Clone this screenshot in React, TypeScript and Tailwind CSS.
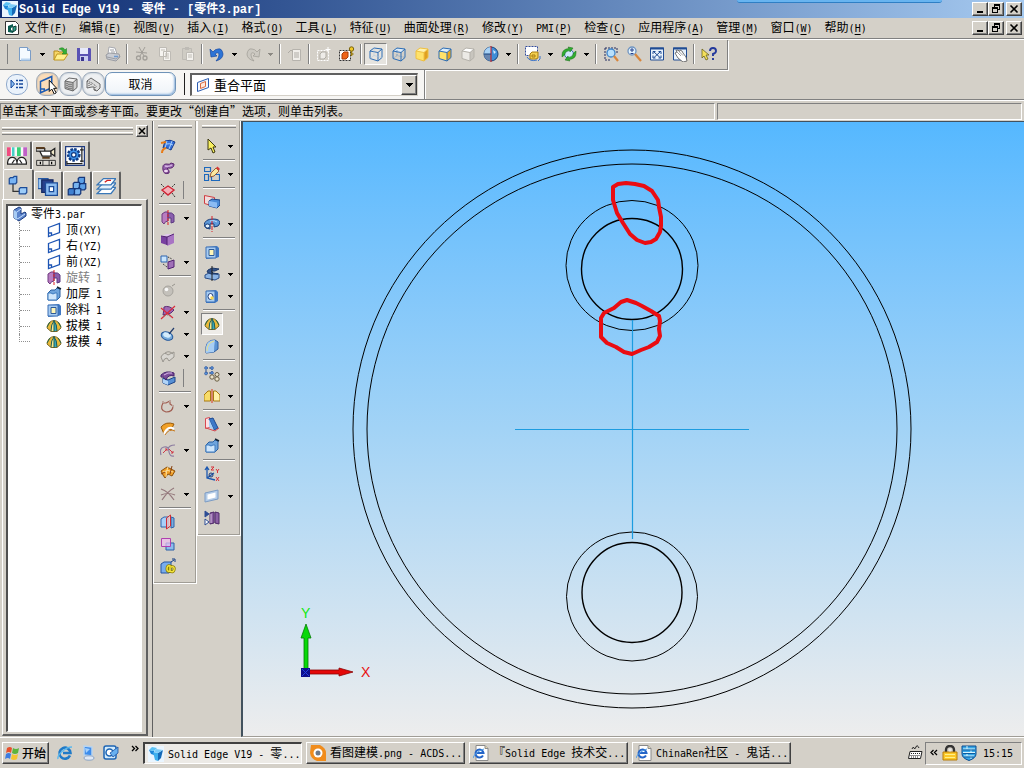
import type { ReactNode } from "react";

/* ---------- text ---------- */

function Txt({ children, bold = false }: { children: string; bold?: boolean }) {
  const parts = children.match(/[\x20-\x7e]+|[^\x20-\x7e]+/g) ?? [];
  return (
    <>
      {parts.map((p, i) =>
        /[\x20-\x7e]/.test(p) ? (
          <span
            key={i}
            className={
              bold
                ? "whitespace-pre font-['Liberation_Mono',monospace] text-[12px]"
                : "whitespace-pre font-['DejaVu_Sans_Mono',monospace] text-[10px]"
            }
          >
            {p}
          </span>
        ) : (
          <span key={i} className="font-['Noto_Sans_CJK_SC',sans-serif] text-[12px]">
            {p}
          </span>
        ),
      )}
    </>
  );
}

/* ---------- icons ---------- */

const cube = (front: string, top: string, side: string, line: string) => (
  <>
    <path d="M2 5l8 1.500V15L2 12.500z" fill={front} />
    <path d="M2 5l4-3 8 1-4 3.500z" fill={top} />
    <path d="M10 6.500L14 3v8.500L10 15z" fill={side} />
    <path d="M2 5l4-3 8 1v8.500L10 15 2 12.500zM2 5l8 1.500L14 3M10 6.500V15" fill="none" stroke={line} />
  </>
);

const plane = (c: string) => (
  <path d="M2.500 5.500L13.500 1.500V10.500L2.500 14.500zM2.500 11h3v3" fill="none" stroke={c} strokeWidth="1.300" />
);

const draft = (
  <>
    <path d="M1 10Q2 3 8 2.500Q14 3 15 10L11 13.500H5z" fill="#e8b93a" stroke="#7a6a28" />
    <path d="M8 3Q5 6 5 13h3z" fill="#f8e88c" />
    <path d="M8 3q3 3 3 10H8z" fill="#3aa8b8" />
    <path d="M8 2v12M5 13Q5 6 8 3q3 3 3 10" fill="none" stroke="#1b5d5a" />
    <path d="M4 4L1 9M12 4l3 5" stroke="#2f6a4a" />
  </>
);

const thicken = (
  <>
    <path d="M2 7l3-3h4l2-2 3 1v8l-3 3H2z" fill="#6ea4dc" stroke="#2a5fa0" />
    <path d="M2 7h3q2 2 4 0h2v7H2z" fill="#cfe6fb" stroke="#3f7cc0" />
    <path d="M11 1l4 2" stroke="#123" strokeWidth="1.500" />
  </>
);

const cutout = (
  <>
    <path d="M2 3l11-1 2 2v9l-3 1-10 1z" fill="#3f78c4" />
    <path d="M2 3l10 0v11L2 14z" fill="#a9cdf2" stroke="#3a6fb4" />
    <path d="M5 5.500h5v6H5z" fill="#fff6b8" stroke="#2c5a98" />
  </>
);

const revolve = (
  <>
    <path d="M2 4q3-3 6-2v9q-3 0-4 3L2 12z" fill="#b87cc0" stroke="#6e3a80" />
    <path d="M8 3q4-1 6 2v7l-3 1V8H8z" fill="#8a5fae" stroke="#5c3a80" />
    <path d="M8 0v16" stroke="#e02020" strokeDasharray="3 1" />
  </>
);

const sheets = (
  <>
    <path d="M6 9h10l-4 5H1z" fill="#fff" stroke="#3a78b8" />
    <path d="M6 5.500h10l-4 5H1z" fill="#e6f1fb" stroke="#3a78b8" />
    <path d="M6 2h10l-4 5H1z" fill="#fff" stroke="#3a78b8" />
    <path d="M7 5l2-1.500h3" fill="none" stroke="#d02020" />
  </>
);

const ie = (
  <>
    <path d="M13 10.500A5.500 5.500 0 1 1 13.500 8H6" fill="none" stroke="#1f7ac8" strokeWidth="2.600" />
    <path d="M1 14C0 10 8 2 15 2" fill="none" stroke="#5bb8ee" strokeWidth="1.400" />
  </>
);

const iePage = (
  <>
    <path d="M3 .5h9l3 3v12H3z" fill="#fff" stroke="#8a8a8a" />
    <path d="M12 .5v3h3" fill="#e8d8a8" stroke="#8a8a8a" />
    <path d="M10 10.500A4 4 0 1 1 10.500 8H4" fill="none" stroke="#2465c8" strokeWidth="2" />
    <path d="M0 13Q2 7 11 4" fill="none" stroke="#4b9be8" />
  </>
);

const solidEdge = (
  <>
    <path d="M0 0h16v16H0z" fill="#e9f5ff" />
    <path d="M1 4l5 1v4L3 8z" fill="#1e86d8" />
    <path d="M5 6l5 1v8l-3-1z" fill="#3fb0ee" />
    <path d="M10 7l5-3-2 8-3 3z" fill="#156ab8" />
    <path d="M8 3l7 1-5 3-4-1z" fill="#7cccf8" />
    <path d="M1 4l3-3 5 1-3 3z" fill="#5cc2f4" />
  </>
);

const icons: Record<string, ReactNode> = {
  app: solidEdge,
  part: (
    <>
      <path d="M1.500 1.500h10l3 3v10h-13z" fill="#fff" stroke="#333" />
      <path d="M4 6l5-2v3L7 8v2l2 1v2L4 12z" fill="#0c5c50" />
      <path d="M9 7l3-1v4l-3 2z" fill="#2fa08a" stroke="#0c3c34" />
    </>
  ),
  new: (
    <>
      <path d="M2.500 1.500h8l3 3v10h-11z" fill="#f4faff" stroke="#7a9cc6" />
      <path d="M10.500 1.500v3h3" fill="#c3dcf6" stroke="#7a9cc6" />
      <path d="M4 13.500h9" stroke="#b9d4f0" strokeWidth="2" />
    </>
  ),
  open: (
    <>
      <path d="M1 14V5h4l1 1h5v3" fill="#f7d768" stroke="#b58a1c" />
      <path d="M1 14l3-6h11l-4 6z" fill="#fff08c" stroke="#c0961e" />
      <path d="M6 3q4-3 6 1l1.500-1.500V8H9l1.500-1.500Q9 3 6 3z" fill="#35b035" stroke="#1b7a1b" strokeWidth=".5" />
    </>
  ),
  save: (
    <>
      <path d="M1 2h13l1 1v12H1z" fill="#5a52b4" />
      <path d="M4 2h8v6H4z" fill="#e6e9fb" />
      <path d="M4 10h8v5H4z" fill="#c9cdf0" />
      <path d="M5 11h3v4H5z" fill="#3b348c" />
    </>
  ),
  print: (
    <>
      <path d="M3 8L4 1l6 1 2 6" fill="#fff" stroke="#a8aab0" />
      <path d="M1 9l3-2 10 1 1 3-4 4-9-2z" fill="#c9ccd2" stroke="#9a9ca2" />
      <path d="M2 11l9 2 4-3M5 4h4M6 6h4" fill="none" stroke="#9a9ca2" />
      <path d="M9 10.500h4" stroke="#6c9ad0" strokeWidth="1.500" />
    </>
  ),
  cut: (
    <>
      <path d="M5 1l5 9M11 1L6 10M2 6l11 1" fill="none" stroke="#a29f99" />
      <circle cx="4.500" cy="12" r="2" fill="none" stroke="#a29f99" strokeWidth="1.300" />
      <circle cx="11" cy="12" r="2" fill="none" stroke="#a29f99" strokeWidth="1.300" />
    </>
  ),
  copy: (
    <>
      <path d="M2.500 1.500h7v9h-7zM6.500 5.500h7v9h-7z" fill="#f6f4f1" stroke="#bebbb5" />
      <path d="M8 8h4M8 10h4M8 12h4M4 4h4" stroke="#c0bdb6" />
    </>
  ),
  paste: (
    <>
      <path d="M2.500 2.500h9v11h-9z" fill="#cfccc4" stroke="#bebbb5" />
      <path d="M5 1h4v3H5z" fill="#bebbb5" />
      <path d="M6.500 6.500h7v8h-7z" fill="#f4f2ee" stroke="#bebbb5" />
      <path d="M8 9h4M8 11h4" stroke="#c0bdb6" />
    </>
  ),
  undo: (
    <path
      d="M1 3l1 8 6-1-2-2q4-3 4 1 0 3-3 6 7-2 7-7Q13 2 9 3 6 3 4 6z"
      fill="#2d74d6"
      stroke="#1548a0"
      strokeWidth=".7"
    />
  ),
  redo: (
    <path
      d="M15 3l-1 8-6-1 2-2Q6 5 6 9q0 3 3 6-7-2-7-7Q3 2 7 3q3 0 5 3z"
      fill="#cbc8c1"
      stroke="#9e9b94"
      strokeWidth=".7"
    />
  ),
  props: (
    <>
      <path d="M5.500 3.500h8v11h-8z" fill="#f0eeea" stroke="#b6b3ad" />
      <path d="M7 7h5M7 9h5M7 11h5M1 7l3-3 2 2" fill="none" stroke="#aeaba5" />
    </>
  ),
  ghostSel: (
    <>
      <path d="M1.500 4.500h11v10h-11z" fill="none" stroke="#fff" strokeDasharray="2 1" />
      <path d="M4 8l2-2h4v5l-2 2H4z" fill="#eeece8" stroke="#b0ada6" />
      <path d="M12 1v5M9.500 3.500h5" stroke="#fff" />
    </>
  ),
  orangeSel: (
    <>
      <path d="M.5 4.500h11v10H.5z" fill="#fff" stroke="#333" strokeDasharray="2 1" />
      <path d="M3 8l2-2h4v5l-2 2H3z" fill="#f06418" stroke="#a83c08" />
      <circle cx="12.500" cy="3" r="2.200" fill="#f0c828" stroke="#7a6410" />
      <path d="M12.500 5v5M12.500 8h2" stroke="#9a7c10" strokeWidth="1.500" />
    </>
  ),
  wire: (
    <>
      {cube("none", "none", "none", "#2c6cb4")}
      <path d="M6 2v7.500l8 2M6 9.500l-4 3" fill="none" stroke="#a8c4dc" strokeWidth=".5" />
    </>
  ),
  wireHid: (
    <>
      {cube("none", "#dcebf8", "none", "#2c6cb4")}
      <path d="M6 2v7.500l8 2M6 9.500l-4 3" fill="none" stroke="#4684c4" strokeWidth=".7" strokeDasharray="1 1" />
    </>
  ),
  shade: cube("#ffe26a", "#fff3b0", "#e0a020", "#efc040"),
  shadeEdge: cube("#ffe26a", "#dceefc", "#e8a820", "#2c6cb4"),
  ghostCube: cube("#eceae6", "#fff", "#c8c5be", "#b4b1aa"),
  ball: (
    <>
      <circle cx="8" cy="8" r="7" fill="#3f8ed8" stroke="#17437c" />
      <path d="M8 1a7 7 0 0 0-7 7h7z" fill="#a8d2f6" />
      <path d="M8 8H1a7 7 0 0 0 7 7z" fill="#6886b0" />
      <path d="M10 4l3 2-2 2z" fill="#d4ecff" />
      <path d="M8 0v16" stroke="#d01818" />
      <path d="M1 8h7" stroke="#17437c" />
    </>
  ),
  views: (
    <>
      <path d="M.5 .5h12v9H.5z" fill="#fff" stroke="#334c9c" strokeDasharray="2 1" />
      <path d="M5 8l2-2h6v6l-2 1H5z" fill="#f4d050" stroke="#a87c10" />
      <path d="M2 11q3 5 10 3M15 10v3l-2 2" fill="none" stroke="#3c74c8" />
      <path d="M7 9h3v2H7z" fill="none" stroke="#a87c10" />
    </>
  ),
  rotate: (
    <>
      <circle cx="8" cy="8" r="4.500" fill="#cfe8fc" stroke="#2c6cb4" />
      <path d="M1 9Q1 3 8 2.500L7 1l5 1-3 4-.5-1.500Q4 5 3.500 9L1 11z" fill="#2fae2f" stroke="#166a16" strokeWidth=".5" />
      <path d="M15 7q0 6-7 6.500L9 15l-5-1 3-4 .5 1.500q4.500-.5 5-4.500L15 5z" fill="#2fae2f" stroke="#166a16" strokeWidth=".5" />
    </>
  ),
  zoomArea: (
    <>
      <path d="M2 2h12M2 2v12M2 14h6M14 2v6" fill="none" stroke="#222c60" strokeDasharray="2 1" />
      <circle cx="8" cy="7" r="4" fill="#b8e0fc" stroke="#3f86cc" strokeWidth="1.300" />
      <path d="M11 10l4 5" stroke="#d8863c" strokeWidth="2.200" />
    </>
  ),
  zoom: (
    <>
      <circle cx="6" cy="5" r="4" fill="#e4f4ff" stroke="#7094c0" strokeWidth="1.300" />
      <path d="M4 4h4M6 2v4M4.500 7.500h3" stroke="#26408c" />
      <path d="M9 8l6 7" stroke="#d8863c" strokeWidth="2.200" />
    </>
  ),
  fit: (
    <>
      <path d="M1.500 2h13v12h-13z" fill="#e8f2fc" stroke="#204c94" />
      <path d="M1 2.500h14" stroke="#204c94" strokeWidth="2" />
      <path d="M4 8V5.500h2.500M12 8V5.500H9.500M4 9.500V12h2.500M12 9.500V12H9.500M5 6l6 5.500M11 6l-6 5.500" fill="none" stroke="#204c94" />
    </>
  ),
  pan: (
    <>
      <path d="M1.500 2h13v12h-13z" fill="#e8f2fc" stroke="#204c94" />
      <path d="M1 2.500h14" stroke="#204c94" strokeWidth="2" />
      <path d="M3 7l2-1-1-1.500 2-.5 1.500 1.500L8 4l2 1 1 2 3 4 1 4-4 1-5-4z" fill="#fff" stroke="#555" strokeWidth=".8" />
      <path d="M5 6l4 4M7 5.500l4 4" stroke="#777" strokeWidth=".7" />
    </>
  ),
  help: (
    <>
      <path d="M1 3l7 6H5l2 4-2 1-2-4-2 2z" fill="#f4e05c" stroke="#5c5410" strokeWidth=".7" />
      <path d="M9 5q0-3 3-3t3 3q0 2-3 3v2M12 12v2" fill="none" stroke="#23389c" strokeWidth="1.900" />
    </>
  ),
  list: (
    <>
      <path d="M2 4l3.500 4L2 12z" fill="#8cc0f4" stroke="#16489c" />
      <path d="M7 4.500h2M10 4.500h4M7 8h2M10 8h4M7 11.500h2M10 11.500h4" stroke="#16489c" strokeWidth="1.300" />
    </>
  ),
  pickPlane: (
    <>
      <path d="M2 6l9-4v9l-9 4zM2 12h3v2" fill="none" stroke="#1e5cb4" strokeWidth="1.200" />
      <path d="M9 5v9l2-2 2 4 1.500-1-2-3.500H15z" fill="#fff" stroke="#111" strokeWidth=".8" />
    </>
  ),
  greyBox: (
    <>
      {cube("#b6b6b6", "#f0f0f0", "#d0d0d0", "#686868")}
      <path d="M4 7v5M6 8v5M8 8v5" stroke="#555" strokeDasharray="1 1" />
    </>
  ),
  greyBox2: (
    <>
      <path d="M1 5l4-3 9 6v4l-3 3-3-1v-3H6l-5 1z" fill="#dcdcdc" stroke="#686868" />
      <path d="M1 5l5 2 5 4M3 7v3M5 8v2M9 11v3" fill="none" stroke="#555" strokeDasharray="1 1" />
    </>
  ),
  coincident: (
    <>
      <path d="M2.500 5.500l11-4v9l-11 4z" fill="#f4f8ff" stroke="#2c5cb0" />
      <path d="M5.500 6.500l5-2v5l-5 2z" fill="#ffe8dc" stroke="#d86840" />
    </>
  ),
  palette: (
    <>
      <path d="M0 1h16v7H0z" fill="#f8f8f8" />
      <path d="M0 1h3v7H0z" fill="#f04c80" />
      <path d="M4 1h2v7H4z" fill="#48d0c8" />
      <path d="M8 1h3v7H8z" fill="#38d078" />
      <path d="M13 1h3v7h-3z" fill="#c060c8" />
      <path d="M.5 14.500V13q.5-4 3.700-4T8 13v1.500zM8 14.500V13q.5-4 3.700-4t3.800 4v1.500z" fill="#fff" stroke="#222" />
      <path d="M4 14l2-3M12 14l-2-3" stroke="#222" />
    </>
  ),
  camera: (
    <>
      <path d="M0 2h7v2H0zM3 4h9v4H5z" fill="#fff" stroke="#222" />
      <path d="M12 4l3-2v6l-3-2z" fill="#f0e8c8" stroke="#222" />
      <path d="M0 1.500h7M5 9.500h6" stroke="#5c3c1c" strokeWidth="1.500" />
      <path d="M.5 11.500h15v4H.5zM5.500 11.500v4M10.500 11.500v4" fill="#dedbd4" stroke="#222" strokeWidth=".7" />
      <path d="M3.500 12.500v2M12.500 12.500v2" stroke="#000" />
    </>
  ),
  gear: (
    <>
      <path d="M.5 .5h15v15H.5z" fill="#fff" stroke="#203c80" />
      <circle cx="7" cy="7" r="4.500" fill="#3f92e8" stroke="#123c84" strokeWidth="2" strokeDasharray="2 1" />
      <circle cx="7" cy="7" r="1.800" fill="#fff" stroke="#123c84" />
      <path d="M13.500 1v12M2 14h12M1.500 12v3M12 3h3M12 12h3" stroke="#222" />
    </>
  ),
  pathfinder: (
    <>
      <path d="M4 6v7h6" fill="none" stroke="#333" />
      <path d="M1 3l1-1h2l1-1h2v5L6 7H1z" fill="#78b4f4" stroke="#1c4c98" />
      <path d="M9 11l1-1h5v4l-1 1H9z" fill="#9cccf8" stroke="#1c4c98" />
    </>
  ),
  family: (
    <>
      <path d="M0 2h8v8H0z" fill="#9cc8f4" stroke="#2458a4" />
      <path d="M3 3h9v10H3z" fill="#28408c" stroke="#142860" />
      <path d="M6 5.500h9.500v10H6z" fill="#8cbcf0" stroke="#1c4c98" />
      <path d="M9 8.500h3.500v4H9z" fill="#fff" stroke="#1c4c98" />
    </>
  ),
  blocks: (
    <>
      <path d="M9 2l1-1h4v4l-1 1H9z" fill="#5ca0e8" stroke="#16387c" />
      <path d="M5 6l1-1h4v4l-1 1H5z" fill="#78b4f0" stroke="#16387c" />
      <path d="M10 7l1-1h4v4l-1 1h-4z" fill="#5ca0e8" stroke="#16387c" />
      <path d="M1 11l1-1h4v4l-1 1H1z" fill="#3f80d0" stroke="#16387c" />
      <path d="M6 11l1-1h4v4l-1 1H6z" fill="#78b4f0" stroke="#16387c" />
    </>
  ),
  layers: sheets,
  rootPart: (
    <>
      <path d="M3 4l5-3 2 1v6l4-2 1 1v3l-7 5-5-3z" fill="#5c84cc" stroke="#1c3c80" />
      <path d="M3 4l3 2v8l-3-2z" fill="#a8ccf4" />
      <path d="M6 6l4-3M6 13l2-1 6-4" fill="none" stroke="#c8e0fc" />
    </>
  ),
  plane: plane("#1c54b4"),
  revolve,
  thicken,
  cutout,
  draft,
  sweepBlue: (
    <>
      <path d="M5 3q5-2 10 1l-4 8q-4-3-8-2z" fill="#3470dc" stroke="#163c8c" />
      <path d="M6 6q4-1 7 1M7 3l-2 7M12 3L9 11" fill="none" stroke="#a8d0fc" />
      <path d="M1 5l5-1M2 15q0-4 4-5" fill="none" stroke="#e87c18" strokeWidth="2" />
    </>
  ),
  swept: (
    <>
      <path d="M3 10Q2 4 6 4q4 1 5-1l3 1q0 5-6 4l-1 1q3 1 2 4-5 2-6-3z" fill="#9868b0" stroke="#58246c" />
      <path d="M5 6q4 1 7-1" fill="none" stroke="#d8b8e4" strokeWidth="1.300" />
      <ellipse cx="6" cy="11" rx="2.500" ry="2" fill="#f0d8f4" stroke="#6c3480" />
    </>
  ),
  bounded: (
    <>
      <path d="M2 8l6-4 6 4-6 5z" fill="#f4b0b8" stroke="#d02434" strokeWidth="1.400" />
      <path d="M1 2l3 3M15 2l-3 3M1 15l3-4M15 15l-3-4" stroke="#333" strokeDasharray="2 1" />
    </>
  ),
  extrudePurple: (
    <>
      <path d="M1 4l6 1v8l-6-2z" fill="#7840a0" />
      <path d="M7 5l7-3v9l-7 3z" fill="#a874c4" />
      <path d="M1 4l6-2 7 0-7 3z" fill="#e0c8ec" />
      <path d="M1 4l6 1 7-3M7 5v8" fill="none" stroke="#502070" />
    </>
  ),
  copySurface: (
    <>
      <path d="M1 2h6v6H1z" fill="#c8e4fc" stroke="#2c64b0" />
      <path d="M8 8l6-2v7l-6 2z" fill="#a070b8" stroke="#502070" />
      <path d="M8 3l4 2M3 10l4 3" stroke="#222" strokeDasharray="1 1" />
    </>
  ),
  sphere: (
    <>
      <circle cx="8" cy="9" r="5" fill="#c4c1bb" stroke="#a6a39d" />
      <circle cx="6.500" cy="7.500" r="1.800" fill="#f8f8f8" />
      <path d="M12 4l3-2" stroke="#96938d" />
    </>
  ),
  trim: (
    <>
      <path d="M4 3q5-2 10 3l-3 3-8 2q1-5 1-8z" fill="#a068b4" stroke="#5c2c74" />
      <path d="M1 15L15 2M1 4l12 10" stroke="#d82c3c" strokeWidth="1.200" />
      <path d="M3 12l5-1 3 2" fill="none" stroke="#888" strokeDasharray="1 1" />
    </>
  ),
  offset: (
    <>
      <ellipse cx="7" cy="10" rx="6" ry="4" fill="#78acdc" stroke="#24589c" transform="rotate(20 7 10)" />
      <ellipse cx="7" cy="9" rx="4" ry="2.500" fill="#d4ecfc" transform="rotate(20 7 9)" />
      <path d="M9 8l5-6" stroke="#223c6c" strokeWidth="1.200" />
    </>
  ),
  greySurf: (
    <>
      <path d="M1 9q3-6 7-2l6-3v5l-5 4-2-3q-3 0-4 4z" fill="#d8d6d1" stroke="#99968f" />
      <path d="M5 5q4-3 8 1" fill="none" stroke="#99968f" />
    </>
  ),
  replace: (
    <>
      <path d="M3 8l5 2 7-3v5l-7 3-5-2z" fill="#5890d4" stroke="#1c4488" />
      <path d="M3 9l5 2v4l-5-2z" fill="#b0d4f8" />
      <path d="M1 5q5-5 13-2v3q-6-2-8 4Q4 6 1 7z" fill="#7c4c98" stroke="#44206c" />
      <path d="M4 5q4-3 8-2" fill="none" stroke="#d8b8e8" />
    </>
  ),
  keypoint: (
    <>
      <path d="M3 5q-4 7 3 9 7 0 7-6l-3-2V3L6 5z" fill="none" stroke="#a05c50" strokeWidth="1.200" />
      <path d="M2 3h2v2H2zM9 2h2v2H9zM12 7h2v2h-2z" fill="#bca49c" />
    </>
  ),
  orangeSurf: (
    <>
      <path d="M1 7q5-6 13-3l-3 6q-4-3-7 4z" fill="#f0a028" stroke="#9c5c0c" />
      <path d="M4 14q4-9 10-5" fill="none" stroke="#fff" strokeWidth="2" />
      <path d="M5 15q4-7 10-4" fill="none" stroke="#c87818" />
    </>
  ),
  crossCurve: (
    <>
      <path d="M1 13Q-1 6 4 5t5 5q1 5 5 4M15 3Q9 3 8 7" fill="none" stroke="#8c7ca0" strokeWidth="1.200" />
      <path d="M3 11l4-4M7 7H5M7 7v2M9 7l4 4M13 11h-2M13 11V9" fill="none" stroke="#d03848" />
    </>
  ),
  orangeSheet: (
    <>
      <path d="M1 7l6-4 8 4-3 5-4-2-3 4-2-3z" fill="#f0a028" stroke="#8c500c" />
      <path d="M3 8q5-3 10 0M8 3q-2 4-2 10" fill="none" stroke="#fce0a0" />
      <path d="M12 2l-2 8M1 10l4-2" stroke="#884010" />
    </>
  ),
  crossLines: (
    <path d="M1 3q7 2 13 11M14 2Q8 5 2 14M1 9q7-3 14 0" fill="none" stroke="#94787c" strokeWidth="1.200" />
  ),
  parting: (
    <>
      <path d="M1 5l3-2h4v10H1z" fill="#a8d0f8" stroke="#3064ac" />
      <path d="M11 3l3 1v9l-3 1z" fill="#78acdc" stroke="#3064ac" />
      <path d="M6.500 4l4-3v11l-4 3z" fill="#f8c8c8" fillOpacity=".7" stroke="#d02c34" />
    </>
  ),
  mate: (
    <>
      <path d="M6 7h8v7H6z" fill="#8cbcec" stroke="#2c60a8" />
      <path d="M1.500 2.500h9v8h-9z" fill="#f0c0f0" fillOpacity=".7" stroke="#b040b0" />
    </>
  ),
  linkPart: (
    <>
      <path d="M1 6l3-2h7v9l-2 2H1z" fill="#78acec" stroke="#2454a0" />
      <path d="M11 4l3-2M12 1h3v3" fill="none" stroke="#123c84" />
      <path d="M7 11q0-4 3-3v5q-3 1-3-2zM11 9q4-1 3 3-1 3-4 1" fill="none" stroke="#8a7c00" strokeWidth="3" />
      <path d="M7 11q0-4 3-3v5q-3 1-3-2zM11 9q4-1 3 3-1 3-4 1" fill="none" stroke="#f4e43c" strokeWidth="1.500" />
    </>
  ),
  select: <path d="M4 1l8 8H9l2 5-2 1-2-5-3 2z" fill="#f8f060" stroke="#3c3810" />,
  sketch: (
    <>
      <path d="M.5 1.500h6v4h-6zM.5 8.500h4v6h-4zM7.500 8.500h8v6h-8z" fill="none" stroke="#1c68bc" strokeWidth="1.200" />
      <path d="M6 11l1-4 5-5 3 3-5 5z" fill="#f8e8a0" stroke="#883c18" strokeWidth=".8" />
      <path d="M12 2l1.500-1.500L16 3l-1.500 1.500z" fill="#d83838" />
    </>
  ),
  protrude: (
    <>
      <path d="M.5 1.500l10 2v9l-10-3z" fill="#f0dcdc" stroke="#d03c40" />
      <path d="M5 7l3-2 8 1v5l-3 3-8-2z" fill="#4c8cd8" stroke="#1c4488" />
      <path d="M5 7l8 1.500V14l-8-2z" fill="#8cbcf4" />
    </>
  ),
  revolveBlue: (
    <>
      <path d="M0 9q1-6 9-6 7 0 7 4-1 4-6 4V8q-2-1-4 0v5q-5 0-6-4z" fill="#5c98d8" stroke="#183c78" />
      <path d="M6 5q5-1 7 1" fill="none" stroke="#c0dcf8" />
      <ellipse cx="3.500" cy="10" rx="2.500" ry="2" fill="#e0f0fc" stroke="#183c78" />
      <path d="M8 0v16" stroke="#d82028" strokeDasharray="4 1" />
    </>
  ),
  slot: (
    <>
      <path d="M1 9l4-2 10 1v4l-4 2-10-2z" fill="#8cb4e4" stroke="#284c88" />
      <path d="M4 4l4-2 7 1-4 2H7l2 2 5 1H7L3 6z" fill="#34548c" stroke="#1c3868" />
      <path d="M8 0v15" stroke="#222" />
    </>
  ),
  hole: (
    <>
      <path d="M2 3l10-1 2 2v9l-3 2H2z" fill="#3f78c4" />
      <path d="M2 3h9v11H2z" fill="#a9cdf2" stroke="#3a6fb4" />
      <ellipse cx="6.500" cy="8.500" rx="2.500" ry="3" fill="#fff" stroke="#1c3c7c" />
      <path d="M6.500 8.500h3v3h-3z" fill="#f8d848" />
    </>
  ),
  round: (
    <>
      <path d="M2 15V9q1-7 9-7l3 2v7l-4 3z" fill="#5c94d4" stroke="#2c5ca0" />
      <path d="M2 15V9q1-7 9-7-1 6-1 12z" fill="#a8cef4" />
      <path d="M3 13q0-8 7-10" fill="none" stroke="#f0e080" />
    </>
  ),
  pattern: (
    <>
      <path d="M2 2h6v5H2z" fill="none" stroke="#284c90" strokeDasharray="2 1" />
      <circle cx="2" cy="2" r="1.400" fill="#5c98e0" stroke="#284c90" strokeWidth=".6" />
      <circle cx="8" cy="2" r="1.400" fill="#5c98e0" stroke="#284c90" strokeWidth=".6" />
      <circle cx="2" cy="7.500" r="1.400" fill="#5c98e0" stroke="#284c90" strokeWidth=".6" />
      <circle cx="8" cy="7" r="1.400" fill="#5c98e0" stroke="#284c90" strokeWidth=".6" />
      <circle cx="8" cy="11" r="2.200" fill="#e8e0c8" stroke="#665c44" />
      <circle cx="13" cy="13" r="2.200" fill="#e8e0c8" stroke="#665c44" />
      <circle cx="13" cy="8.500" r="2" fill="#e8e0c8" stroke="#665c44" />
    </>
  ),
  mirror: (
    <>
      <path d="M0 13V7l4-4h2.500v10z" fill="#f8dc68" stroke="#a87810" />
      <path d="M16 13V7l-4-4H9.500v10z" fill="#fff0a8" stroke="#a87810" />
      <path d="M8 1v14" stroke="#d83818" />
    </>
  ),
  rib: (
    <>
      <path d="M1.500 2.500l4-1v10l-4 1z" fill="#fce0e4" stroke="#d84850" />
      <path d="M5 3l4-1 5 10-4 2z" fill="#3c78c8" stroke="#1c4890" />
      <path d="M5 3v8l5 3z" fill="#a8d0f8" />
      <path d="M2 12l9 3 4-3" fill="none" stroke="#d84850" />
    </>
  ),
  coords: (
    <>
      <path d="M3 2v10l8 2M3 12l7-5M1 4l2-3 2 3" fill="none" stroke="#1c58b0" strokeWidth="1.300" />
      <path d="M7 1h3l-3 3h3M12 3l1.500 2L15 3M13.500 5v2M12 11l3 4M15 11l-3 4" fill="none" stroke="#d83038" />
      <circle cx="7" cy="9" r="2" fill="none" stroke="#1c3c7c" />
    </>
  ),
  refPlane: (
    <>
      <path d="M1 5l13-3v9L1 14z" fill="#b4cce8" stroke="#7c9cc4" />
      <path d="M3.500 6.500l8-2v5l-8 2z" fill="#fff" />
    </>
  ),
  mirrorBody: (
    <>
      <path d="M1 1l4 3-4 3z" fill="#2c4c94" stroke="#2c4c94" />
      <path d="M1 9l4 3-4 3z" fill="#fff" stroke="#2c4c94" />
      <path d="M6 3l4-1v11l-4 1zM11 2l4 1v11l-4-1z" fill="#8c60a4" stroke="#4c2868" />
      <path d="M7 4v9" stroke="#d8c0e4" />
    </>
  ),
  windows: (
    <>
      <path d="M2 3q3-2 5 0L6 8Q4 6 1 8z" fill="#e8502c" />
      <path d="M8 3q3 2 6 0l-1 5q-3 2-6 0z" fill="#5cb43c" />
      <path d="M1 9q3-2 5 0l-1 5q-2-2-5 0z" fill="#3c7ce0" />
      <path d="M7 9q3 2 6 0l-1 5q-3 2-6 0z" fill="#f4c430" />
    </>
  ),
  ie,
  desktop: (
    <>
      <path d="M4 1l8 1v9l-8-1z" fill="#3c8cec" stroke="#b8d4f0" strokeWidth="1.500" />
      <path d="M5 3l5 1-4 4z" fill="#a4d0fc" />
      <ellipse cx="9" cy="13" rx="5" ry="2.200" fill="#e0e8f4" stroke="#8ca4c4" />
    </>
  ),
  outlook: (
    <>
      <rect x="1" y="1" width="12" height="13" rx="2" fill="#d4ecfc" stroke="#1c64b4" strokeWidth="1.500" />
      <circle cx="6.500" cy="7.500" r="3.500" fill="#fff" stroke="#1c64b4" strokeWidth="1.500" />
      <path d="M7 8l8-6v6l-5 4z" fill="#68b0f0" stroke="#1c50a0" strokeWidth=".8" />
    </>
  ),
  acdsee: (
    <>
      <path d="M1 0h9q6 3 6 8v8H7Q1 14 0 8z" fill="#f08c1c" />
      <circle cx="8" cy="8" r="4.500" fill="#fff" />
      <circle cx="8" cy="8" r="2.500" fill="#6c7888" />
    </>
  ),
  iePage,
  keyboard: (
    <>
      <path d="M5 4q1-3 2-1t2-1 3 1" fill="none" stroke="#222" />
      <path d="M3 6.500h12l-1.500 7h-12z" fill="#fff" stroke="#222" />
      <path d="M4 8.500h10M3.500 10.500h10M4 12h8" stroke="#222" strokeDasharray="1 1" />
    </>
  ),
  lock: (
    <>
      <path d="M4 8V5q0-4 4-4t4 4v3" fill="none" stroke="#333" strokeWidth="2.400" />
      <path d="M1 7h14v8H1z" fill="#fcc828" stroke="#b87c08" />
      <path d="M3 9.500h10M3 12.500h10" stroke="#fff088" />
      <circle cx="8" cy="5" r="1.500" fill="#e8e8e8" />
    </>
  ),
  shield: (
    <>
      <path d="M1 1h14v8q0 4-7 6.500Q1 13 1 9z" fill="#38a8e8" stroke="#0c4c90" />
      <path d="M2 4h12M2 7.500h12M3 11h10M6 1v3M10 4v3.500M6 7.500V11M10 11v3" stroke="#d8f4fc" />
      <path d="M2 5h12M2 8.500h12M3 12h10" stroke="#0c5ca0" />
    </>
  ),
};

function Icon({ name, big = false }: { name: string; big?: boolean }) {
  return (
    <svg viewBox="0 0 16 16" className={big ? "size-5 shrink-0" : "size-4 shrink-0"} aria-hidden="true">
      {icons[name]}
    </svg>
  );
}

function Caret({ muted = false }: { muted?: boolean }) {
  return (
    <svg viewBox="0 0 5 3" className="h-[3px] w-[5px] shrink-0" shapeRendering="crispEdges" aria-hidden="true">
      <path d="M0 0h5L2.500 3z" fill={muted ? "#8c8983" : "#000"} />
    </svg>
  );
}

/* ---------- window chrome ---------- */

const raised =
  "border border-t-white border-l-white border-r-[#404040] border-b-[#404040] bg-[#d4d0c8] shadow-[inset_-1px_-1px_0_#808080]";

function WindowButtons() {
  return (
    <div className="flex items-center pr-[2px]">
      <button type="button" aria-label="Minimize" className={`flex h-[14px] w-4 items-center justify-center ${raised}`}>
        <svg viewBox="0 0 10 10" className="size-[10px]" shapeRendering="crispEdges">
          <path d="M2 7h6v2H2z" />
        </svg>
      </button>
      <button type="button" aria-label="Restore" className={`flex h-[14px] w-4 items-center justify-center ${raised}`}>
        <svg viewBox="0 0 10 10" className="size-[10px]" shapeRendering="crispEdges">
          <path d="M3 0h6v6H7V5h1V2H4v1H3zM1 3h6v6H1zM2 5v3h4V5z" fillRule="evenodd" />
        </svg>
      </button>
      <button
        type="button"
        aria-label="Close"
        className={`ml-[2px] flex h-[14px] w-4 items-center justify-center ${raised}`}
      >
        <svg viewBox="0 0 10 10" className="size-[10px]">
          <path d="M1.500 1.500l7 7M8.500 1.500l-7 7" stroke="#000" strokeWidth="1.600" />
        </svg>
      </button>
    </div>
  );
}

const menus: [string, string][] = [
  ["文件", "F"],
  ["编辑", "E"],
  ["视图", "V"],
  ["插入", "I"],
  ["格式", "O"],
  ["工具", "L"],
  ["特征", "U"],
  ["曲面处理", "R"],
  ["修改", "Y"],
  ["PMI", "P"],
  ["检查", "C"],
  ["应用程序", "A"],
  ["管理", "M"],
  ["窗口", "W"],
  ["帮助", "H"],
];

/* "|" is a separator, "v" a drop-down arrow, "x" a disabled arrow, "*" marks a pressed button */
const mainTools =
  "new v open save | print | cut copy paste | undo v redo x | props | ghostSel orangeSel | *wire wireHid shade shadeEdge ghostCube ball v | views v rotate v | zoomArea zoom fit pan | help".split(
    " ",
  );

function MainToolbar() {
  return (
    <div className="flex">
      <div className="flex h-[30px] items-center border-r border-b border-[#808080] pr-[7px] pb-px shadow-[1px_1px_0_#fff]">
        <div className="mr-[5px] ml-[5px] h-5 w-[3px] border-r border-[#808080]" />
        {mainTools.map((t, i) => {
          if (t === "|")
            return (
              <div key={i} className="flex h-5 w-[6px] justify-center">
                <div className="w-[2px] border-r border-l border-r-white border-l-[#808080]" />
              </div>
            );
          if (t === "v" || t === "x")
            return (
              <button key={i} type="button" aria-label="More" className="flex h-[22px] w-[13px] items-center justify-center">
                <Caret muted={t === "x"} />
              </button>
            );
          const on = t.startsWith("*");
          return (
            <button
              key={i}
              type="button"
              aria-label={t.replace("*", "")}
              className={
                on
                  ? "flex h-[22px] w-[23px] items-center justify-center border border-t-[#808080] border-r-white border-b-white border-l-[#808080] bg-[#e6e4df]"
                  : "flex h-[22px] w-[23px] items-center justify-center"
              }
            >
              <Icon name={t.replace("*", "")} />
            </button>
          );
        })}
      </div>
    </div>
  );
}

function Ribbon() {
  const step =
    "flex h-6 w-[23px] items-center justify-center rounded-[9px] border border-[#9daaba] shadow-[inset_0_0_2px_#9ab]";
  return (
    <div className="flex">
      <div className="flex h-[29px] items-center border-r border-[#808080] bg-[#f6f5f3] pr-[6px] pb-px shadow-[1px_0_0_#fff]">
        <button
          type="button"
          aria-label="list"
          className="ml-[6px] flex h-[21px] w-[22px] items-center justify-center rounded-[10px] border border-[#8fa9cc] bg-[#eaf2fb]"
        >
          <Icon name="list" />
        </button>
        <button type="button" aria-label="plane" className={`ml-2 bg-[#fbdcb8] ${step}`}>
          <Icon name="pickPlane" big />
        </button>
        <button type="button" aria-label="profile" className={`bg-[#eef0f2] ${step}`}>
          <Icon name="greyBox" />
        </button>
        <button type="button" aria-label="draft" className={`bg-[#eef0f2] ${step}`}>
          <Icon name="greyBox2" />
        </button>
        <button
          type="button"
          className="h-6 w-[71px] rounded-[7px] border border-[#6f93b8] bg-linear-to-b from-white to-[#eef3f8] text-center leading-[20px] shadow-[inset_-1px_-1px_2px_#8fb4dc]"
        >
          <Txt>取消</Txt>
        </button>
        <div className="ml-[8px] h-[22px] w-px bg-[#202020]" />
        <div className="relative ml-[5px] flex h-[23px] w-[228px] items-center border-t-2 border-r border-b border-l-2 border-t-[#606060] border-r-[#d4d0c8] border-b-[#d4d0c8] border-l-[#606060] bg-white">
          <span className="pointer-events-none absolute left-[3px]">
            <Icon name="coincident" />
          </span>
          <select
            aria-label="创建自"
            className="h-5 w-full appearance-none bg-transparent pl-[22px] font-['Noto_Sans_CJK_SC',sans-serif] text-[13px] leading-5 outline-none"
          >
            <option>重合平面</option>
          </select>
          <span className={`pointer-events-none absolute right-0 flex h-5 w-4 items-center justify-center ${raised}`}>
            <svg viewBox="0 0 7 4" className="h-1 w-[7px]" shapeRendering="crispEdges">
              <path d="M0 0h7L3.500 4z" />
            </svg>
          </span>
        </div>
      </div>
    </div>
  );
}

/* ---------- feature tree pane ---------- */

const tree = [
  { icon: "plane", text: "顶(XY)" },
  { icon: "plane", text: "右(YZ)" },
  { icon: "plane", text: "前(XZ)" },
  { icon: "revolve", text: "旋转 1", muted: true },
  { icon: "thicken", text: "加厚 1" },
  { icon: "cutout", text: "除料 1" },
  { icon: "draft", text: "拔模 1" },
  { icon: "draft", text: "拔模 4" },
];

function Tab({ name, active = false }: { name: string; active?: boolean }) {
  return (
    <button
      type="button"
      role="tab"
      aria-label={name}
      aria-selected={active}
      className={
        active
          ? "flex h-[30px] w-[31px] items-center justify-center rounded-t-[2px] border-t border-r-2 border-l border-t-white border-r-[#606060] border-l-white"
          : "flex h-7 w-[29px] items-center justify-center rounded-t-[2px] border-t border-r-2 border-l border-t-white border-r-[#606060] border-l-white"
      }
    >
      <Icon name={name} big />
    </button>
  );
}

function Pane() {
  return (
    <aside className="flex w-[153px] shrink-0 flex-col border-r border-[#606060] pr-1 pb-px">
      <div className="flex h-[20px] items-center gap-[3px] pl-[2px]">
        <div className="flex flex-1 flex-col gap-[2px]">
          <div className="h-[3px] border-t border-b border-t-white border-b-[#808080]" />
          <div className="h-[3px] border-t border-b border-t-white border-b-[#808080]" />
        </div>
        <button type="button" aria-label="Close pane" className={`flex size-3 items-center justify-center ${raised}`}>
          <svg viewBox="0 0 8 8" className="size-2">
            <path d="M1 1l6 6M7 1L1 7" stroke="#000" strokeWidth="1.500" />
          </svg>
        </button>
      </div>
      <div role="tablist" className="pl-[3px]">
        <div className="flex">
          <Tab name="palette" />
          <Tab name="camera" />
          <Tab name="gear" />
        </div>
        <div className="flex items-end">
          <Tab name="pathfinder" active />
          <Tab name="family" />
          <Tab name="blocks" />
          <Tab name="layers" />
        </div>
      </div>
      <div className="ml-[2px] flex flex-1 border-t border-r-2 border-b-2 border-l border-t-white border-r-[#606060] border-b-[#606060] border-l-white pt-1 pr-1 pb-[2px] pl-[3px]">
        <div className="flex-1 border-t-2 border-r border-b border-l-2 border-t-[#505050] border-r-white border-b-white border-l-[#505050] bg-white pl-[3px]">
          <div className="flex h-4 items-center gap-1">
            <Icon name="rootPart" />
            <span className="leading-4">
              <Txt>零件3.par</Txt>
            </span>
          </div>
          <ul className="pl-2">
            {tree.map((n, i) => (
              <li key={i} className="flex h-4 items-center">
                <span
                  className={
                    i === tree.length - 1
                      ? "mb-2 h-2 w-[11px] border-b border-l border-dotted border-[#909090]"
                      : "flex h-4 w-[11px] items-center border-l border-dotted border-[#909090]"
                  }
                >
                  {i < tree.length - 1 && <span className="w-full border-b border-dotted border-[#909090]" />}
                </span>
                <span className={n.muted ? "ml-4 flex items-center gap-1 text-[#808080]" : "ml-4 flex items-center gap-1"}>
                  <Icon name={n.icon} />
                  <span className="leading-4">
                    <Txt>{n.text}</Txt>
                  </span>
                </span>
              </li>
            ))}
          </ul>
        </div>
      </div>
    </aside>
  );
}

/* ---------- vertical toolbars; a trailing "-v" adds an arrow, "!" a divider ---------- */

const surfaceTools =
  "sweepBlue swept bounded! | revolve-v extrudePurple copySurface-v | sphere trim-v offset-v greySurf-v replace! | keypoint-v orangeSurf crossCurve-v orangeSheet crossLines-v | parting mate linkPart".split(
    " ",
  );
const featureTools =
  "select-v | sketch-v | protrude revolveBlue-v | cutout slot-v hole-v | *draft round-v | pattern-v mirror-v | rib-v thicken-v | coords refPlane-v mirrorBody".split(
    " ",
  );

function ToolColumn({ tools }: { tools: string[] }) {
  return (
    <div className="flex w-11 shrink-0 flex-col self-start border-r border-b border-l border-r-white border-b-white border-l-white pb-[6px] shadow-[inset_-1px_-1px_0_#a09d96]">
      <div className="mx-1 mt-1 mb-[7px] h-[3px] border-t border-b border-t-white border-b-[#808080]" />
      {tools.map((t, i) => {
        if (t === "|")
          return (
            <div key={i} className="mx-[5px] flex h-[6px] flex-col justify-center">
              <div className="h-[2px] border-t border-b border-t-[#808080] border-b-white" />
            </div>
          );
        const name = t.replace(/\*|!|-v/g, "");
        return (
          <div key={i} className="flex h-[22px] items-center pl-[3px]">
            <button
              type="button"
              aria-label={name}
              className={
                t.startsWith("*")
                  ? "flex size-[22px] items-center justify-center border border-t-[#808080] border-r-white border-b-white border-l-[#808080] bg-[#eeece8]"
                  : "flex size-[22px] items-center justify-center"
              }
            >
              <Icon name={name} />
            </button>
            {t.endsWith("-v") && (
              <button type="button" aria-label="More" className="flex h-[22px] w-[15px] items-center justify-center">
                <Caret />
              </button>
            )}
            {t.endsWith("!") && <div className="ml-1 h-[18px] w-px bg-[#808080]" />}
          </div>
        );
      })}
    </div>
  );
}

/* ---------- drawing ---------- */

function Viewport() {
  return (
    <main className="min-w-0 flex-1 border-t border-b border-l-2 border-t-[#42525e] border-b-[#a09d96] border-l-[#42525e] bg-linear-to-b from-[#55b8ff] via-[#a2d3f6] to-[#ededed]">
      <svg viewBox="243 122 781 614" className="size-full" fill="none" role="img" aria-label="零件3.par">
        <g stroke="#000">
          <circle cx="632" cy="429" r="279" />
          <circle cx="632" cy="429" r="265" />
          <ellipse cx="632" cy="265.500" rx="66" ry="65" />
          <circle cx="632" cy="269" r="50.500" strokeWidth="1.400" />
          <ellipse cx="632" cy="596.500" rx="65.500" ry="64.500" />
          <circle cx="632" cy="592.500" r="50" strokeWidth="1.400" />
        </g>
        <path d="M515 429.500h234M632.500 320v219" stroke="#1c9ce0" strokeWidth="1.200" />
        <g stroke="#ea0c12" strokeWidth="4" strokeLinejoin="round" strokeLinecap="round">
          <path d="M613 187l5-3 8-1 9 1 9 2 8 5 6 9 1 7 2 10v9l-1 6-4 7-5 3-6 1-8-3-7-6-7-11-6-10-4-13z" />
          <path d="M627 300l-6 2-7 6-10 5-3 5v19l6 6 9 4 8 5 8 2 9-4 8-3 8-5 3-6-1-7 1-8-1-5-8-5-9-5-6-3z" />
        </g>
        <path d="M304 670v-32h-3l5-14 5 14h-3v32z" fill="#08d808" stroke="#047c04" strokeWidth=".8" />
        <path d="M309 670h30v-2l14 4-14 4v-2h-30z" fill="#e40808" stroke="#8c0404" strokeWidth=".8" />
        <rect x="301" y="668" width="9" height="9" fill="#0c0c8c" />
        <path d="M302 669l7 7M309 669l-7 7" stroke="#2040e0" />
        <text x="301" y="618" fill="#10e810" className="font-['Liberation_Sans',sans-serif] text-[14px]">
          Y
        </text>
        <text x="361" y="677" fill="#e81010" className="font-['Liberation_Sans',sans-serif] text-[14px]">
          X
        </text>
      </svg>
    </main>
  );
}

/* ---------- taskbar ---------- */

const tasks = [
  { icon: "app", text: "Solid Edge V19 - 零...", on: true },
  { icon: "acdsee", text: "看图建模.png - ACDS..." },
  { icon: "iePage", text: "『Solid Edge 技术交..." },
  { icon: "iePage", text: "ChinaRen社区 - 鬼话..." },
];

function Taskbar() {
  return (
    <footer className="flex h-[31px] shrink-0 items-center border-t border-white pl-[2px]">
      <button type="button" className={`flex h-[22px] w-[47px] items-center gap-px pl-[2px] ${raised}`}>
        <Icon name="windows" />
        <span className="font-medium">
          <Txt>开始</Txt>
        </span>
      </button>
      <div className="ml-2 flex gap-[7px]">
        {["ie", "desktop", "outlook"].map((n) => (
          <button key={n} type="button" aria-label={n}>
            <Icon name={n} />
          </button>
        ))}
      </div>
      <button type="button" aria-label="More" className="ml-3 flex h-4 w-2 pb-1">
        <svg viewBox="0 0 8 8" className="size-2" fill="none" stroke="#000" strokeWidth="1.300">
          <path d="M1 1l2.500 2.500L1 6M4.500 1L7 3.500 4.500 6" />
        </svg>
      </button>
      <div className="ml-1 flex gap-1">
        {tasks.map((t) => (
          <button
            key={t.text}
            type="button"
            className={
              t.on
                ? "flex h-[22px] w-[159px] items-center gap-1 border-t-2 border-r border-b border-l-2 border-t-[#404040] border-r-white border-b-white border-l-[#404040] bg-[#eceae6] pl-[3px]"
                : `flex h-[22px] w-[159px] items-center gap-1 pl-[3px] ${raised}`
            }
          >
            <Icon name={t.icon} />
            <span className="leading-4 whitespace-nowrap">
              <Txt>{t.text}</Txt>
            </span>
          </button>
        ))}
      </div>
      <div className="ml-auto flex items-center gap-[2px] pr-[2px]">
        <Icon name="keyboard" />
        <div className="flex h-[23px] w-[97px] items-center border border-t-[#808080] border-r-white border-b-white border-l-[#808080] pl-1">
          <svg viewBox="0 0 8 8" className="size-2" fill="none" stroke="#000" strokeWidth="1.300">
            <path d="M3.500 1L1 3.500 3.500 6M7 1L4.500 3.500 7 6" />
          </svg>
          <div className="ml-1 flex gap-[3px]">
            <Icon name="lock" />
            <Icon name="shield" />
          </div>
          <span className="ml-[6px]">
            <Txt>15:15</Txt>
          </span>
        </div>
      </div>
    </footer>
  );
}

export default function App() {
  return (
    <div className="flex h-screen min-h-[700px] flex-col overflow-hidden bg-[#d4d0c8] text-[12px] leading-4 text-black">
      <header className="relative flex h-[18px] shrink-0 items-center justify-between bg-linear-to-r from-[#0d2a70] to-[#a6caf0] pl-[2px]">
        <div className="absolute top-0 left-[72%] h-[3px] w-[20%] rounded-b-[3px] border-b border-[#2f7fc4] bg-[#68b4f0]" />
        <h1 className="flex items-center gap-px font-bold text-white">
          <Icon name="app" />
          <span className="leading-4">
            <Txt bold>Solid Edge V19 - 零件 - [零件3.par]</Txt>
          </span>
        </h1>
        <WindowButtons />
      </header>
      <nav className="flex h-[21px] shrink-0 items-center border-b border-[#808080] pl-1">
        <Icon name="part" />
        <div className="ml-[5px] flex gap-3">
          {menus.map(([label, key]) => (
            <button key={key} type="button" className="leading-[18px] whitespace-nowrap">
              <Txt>{`${label}(`}</Txt>
              <u className="underline-offset-2">
                <Txt>{key}</Txt>
              </u>
              <Txt>)</Txt>
            </button>
          ))}
        </div>
        <div className="ml-auto">
          <WindowButtons />
        </div>
      </nav>
      <div className="shrink-0 border-t border-b border-t-white border-b-[#808080]">
        <MainToolbar />
        <Ribbon />
      </div>
      <div className="flex h-[21px] shrink-0 gap-[2px] border-t border-white pt-[2px] pr-[2px] pb-px">
        <p className="w-[70%] border border-t-[#808080] border-r-white border-b-white border-l-[#808080] pl-px leading-[14px]">
          <Txt>单击某个平面或参考平面。要更改“创建自”选项，则单击列表。</Txt>
        </p>
        <div className="flex-1 border border-t-[#808080] border-r-white border-b-white border-l-[#808080]" />
      </div>
      <div className="flex min-h-0 flex-1">
        <Pane />
        <ToolColumn tools={surfaceTools} />
        <ToolColumn tools={featureTools} />
        <Viewport />
      </div>
      <Taskbar />
    </div>
  );
}
